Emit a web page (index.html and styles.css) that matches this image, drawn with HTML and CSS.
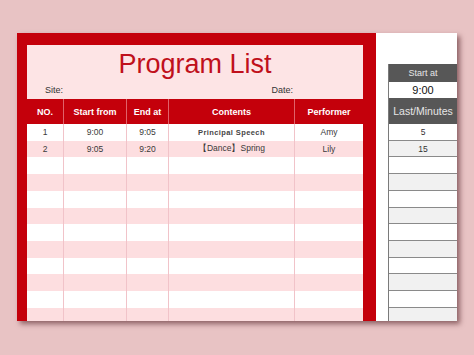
FILE: index.html
```html
<!DOCTYPE html>
<html>
<head>
<meta charset="utf-8">
<link rel="stylesheet" href="styles.css">
</head>
<body>
<div class="sheet">
  <div class="frame">
    <div class="head">
      <div class="title">Program List</div>
      <div class="meta"><span class="site">Site:</span><span class="date">Date:</span></div>
    </div>
    <div class="table">
      <div class="row hdr"><div>NO.</div><div>Start from</div><div>End at</div><div>Contents</div><div>Performer</div></div>
      <div class="row"><div>1</div><div>9:00</div><div>9:05</div><div class="bold">Principal Speech</div><div>Amy</div></div>
      <div class="row alt"><div>2</div><div>9:05</div><div>9:20</div><div>【Dance】Spring</div><div>Lily</div></div>
      <div class="row"><div></div><div></div><div></div><div></div><div></div></div>
      <div class="row alt"><div></div><div></div><div></div><div></div><div></div></div>
      <div class="row"><div></div><div></div><div></div><div></div><div></div></div>
      <div class="row alt"><div></div><div></div><div></div><div></div><div></div></div>
      <div class="row"><div></div><div></div><div></div><div></div><div></div></div>
      <div class="row alt"><div></div><div></div><div></div><div></div><div></div></div>
      <div class="row"><div></div><div></div><div></div><div></div><div></div></div>
      <div class="row alt"><div></div><div></div><div></div><div></div><div></div></div>
      <div class="row"><div></div><div></div><div></div><div></div><div></div></div>
      <div class="row alt"><div></div><div></div><div></div><div></div><div></div></div>
    </div>
  </div>
  <div class="side">
    <div class="panel">
      <div class="dark small">Start at</div>
      <div class="val">9:00</div>
      <div class="dark big">Last/Minutes</div>
      <div class="cell">5</div>
      <div class="cell alt">15</div>
      <div class="cell"></div>
      <div class="cell alt"></div>
      <div class="cell"></div>
      <div class="cell alt"></div>
      <div class="cell"></div>
      <div class="cell alt"></div>
      <div class="cell"></div>
      <div class="cell alt"></div>
      <div class="cell"></div>
      <div class="cell alt"></div>
    </div>
  </div>
</div>
</body>
</html>
```

FILE: styles.css
```css
html, body {
  margin: 0;
  padding: 0;
}
body {
  background: #e8c3c4;
  width: 474px;
  height: 355px;
  overflow: hidden;
  font-family: "Liberation Sans", Arial, sans-serif;
}
.sheet {
  margin: 33px 0 0 17px;
  width: 440px;
  height: 288px;
  display: flex;
  overflow: hidden;
  box-shadow: 3px 3px 5px rgba(70, 20, 25, 0.55);
  background: #fff;
}
.frame {
  width: 336px;
  background: #c4000b;
  padding: 12px 13px 0 10px;
  flex: none;
}
.head {
  background: #fde4e5;
  height: 54px;
}
.title {
  padding-top: 4px;
  height: 30px;
  line-height: 30px;
  font-size: 27px;
  color: #c0101b;
  text-align: center;
}
.meta {
  display: flex;
  font-size: 9px;
  line-height: 12px;
  color: #333;
  padding-top: 5px;
}
.site {
  padding-left: 18px;
}
.date {
  margin-left: auto;
  padding-right: 70px;
}
.row {
  display: grid;
  grid-template-columns: 36px 63px 42px 126px 69px;
  height: 16.73px;
  background: #fff;
}
.row.alt {
  background: #fddee0;
}
.row > div {
  display: flex;
  align-items: center;
  justify-content: center;
  font-size: 8.5px;
  color: #3a3a3a;
  white-space: nowrap;
}
.row > div + div {
  border-left: 1px solid #f1c3c9;
}
.row .bold {
  font-weight: bold;
  font-size: 7.5px;
  letter-spacing: 0.4px;
  color: #444;
}
.row.hdr {
  height: 25px;
  background: #c4000b;
}
.row.hdr > div {
  color: #fff;
  font-weight: bold;
  font-size: 9px;
}
.row.hdr > div + div {
  border-left: 1px solid #e0626a;
}
.side {
  flex: 1;
  background: #fff;
  padding: 31px 0 0 12px;
}
.panel {
  border-left: 1px solid #7a7a7a;
}
.dark {
  background: #575757;
  color: #e6e6e6;
  display: flex;
  align-items: center;
  justify-content: center;
}
.dark.small {
  height: 18px;
  font-size: 9px;
}
.dark.big {
  height: 26px;
  font-size: 10.5px;
}
.val {
  height: 16px;
  display: flex;
  align-items: center;
  justify-content: center;
  font-size: 11px;
  color: #111;
}
.cell {
  height: 15.73px;
  border-bottom: 1px solid #8a8a8a;
  display: flex;
  align-items: center;
  justify-content: center;
  font-size: 8.5px;
  color: #333;
  background: #fff;
}
.cell.alt {
  background: #f1f1f1;
}
```
